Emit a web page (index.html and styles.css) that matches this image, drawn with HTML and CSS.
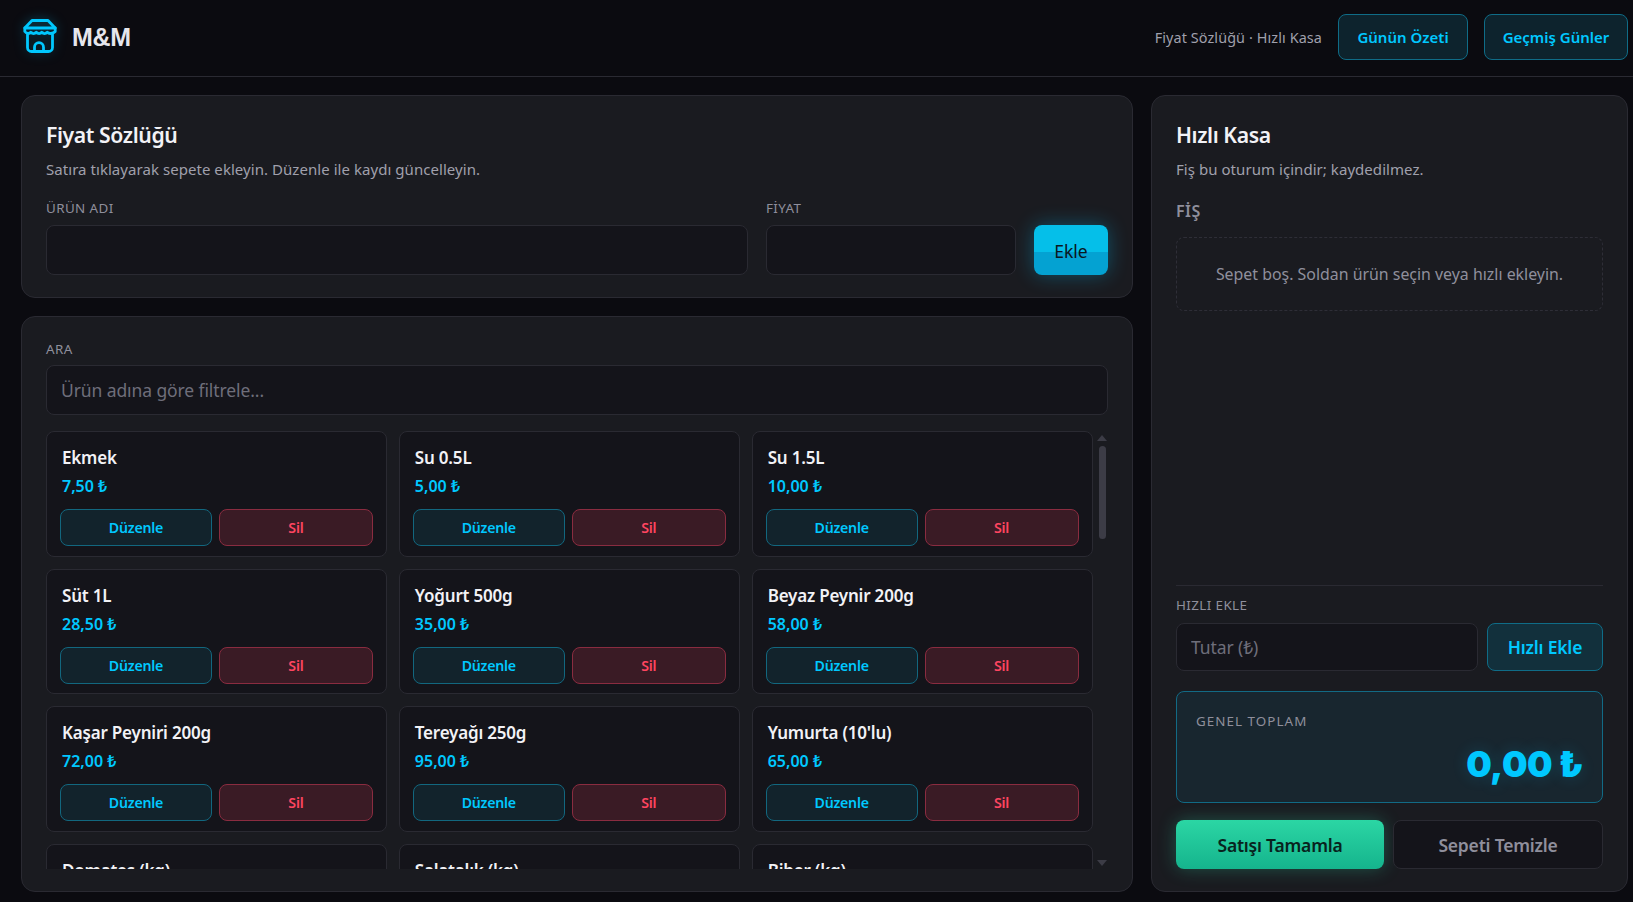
FILE: index.html
```html
<!DOCTYPE html>
<html lang="tr">
<head>
    <meta charset="UTF-8">
    <title>M&amp;M</title>
    <link rel="stylesheet" href="styles.css">
</head>
<body>

    <header class="topbar">
        <div class="brand">
            <svg class="brand-icon" viewBox="0 0 36 36" fill="none" stroke="#00c8ff" stroke-width="2.800" stroke-linejoin="round" stroke-linecap="round">
                <path d="M10 1.500h16l7.200 7.500H2.800z" fill="#0b2a35"/>
                <path d="M2.800 9v3.500c2 2.500 4.500 2.500 6 .8 1.500 1.700 4 1.700 5.500 0 1.500 1.700 4 1.700 5.500 0 1.500 1.700 4 1.700 5.500 0 1.500 1.700 5.500 1.700 7.900-.8V9"/>
                <path d="M5.500 15.500v13a4 4 0 0 0 4 4h17a4 4 0 0 0 4-4v-13"/>
                <path d="M12.500 32.500v-4.300a4.500 4.500 0 0 1 9 0v4.300"/>
            </svg>
            <span class="brand-name">M&amp;M</span>
        </div>
        <div class="topbar-right">
            <span class="topbar-text">Fiyat Sözlüğü · Hızlı Kasa</span>
            <button class="btn btn-ghost top-btn">Günün Özeti</button>
            <button class="btn btn-ghost top-btn">Geçmiş Günler</button>
        </div>
    </header>

    <main class="layout">
        <div class="left-col">
            <section class="panel form-panel">
                <h2>Fiyat Sözlüğü</h2>
                <p class="sub">Satıra tıklayarak sepete ekleyin. Düzenle ile kaydı güncelleyin.</p>
                <div class="form-row">
                    <div class="field name-field">
                        <label>ÜRÜN ADI</label>
                        <input type="text">
                    </div>
                    <div class="field price-field">
                        <label>FİYAT</label>
                        <input type="text">
                    </div>
                    <button class="btn btn-add">Ekle</button>
                </div>
            </section>

            <section class="panel list-panel">
                <div class="field">
                    <label>ARA</label>
                    <input type="text" placeholder="Ürün adına göre filtrele...">
                </div>
                <div class="list-wrap">
                    <div class="product-grid">
                        <div class="product">
                            <div class="p-name">Ekmek</div>
                            <div class="p-price">7,50 ₺</div>
                            <div class="p-actions"><button class="btn btn-edit">Düzenle</button><button class="btn btn-del">Sil</button></div>
                        </div>
                        <div class="product">
                            <div class="p-name">Su 0.5L</div>
                            <div class="p-price">5,00 ₺</div>
                            <div class="p-actions"><button class="btn btn-edit">Düzenle</button><button class="btn btn-del">Sil</button></div>
                        </div>
                        <div class="product">
                            <div class="p-name">Su 1.5L</div>
                            <div class="p-price">10,00 ₺</div>
                            <div class="p-actions"><button class="btn btn-edit">Düzenle</button><button class="btn btn-del">Sil</button></div>
                        </div>
                        <div class="product">
                            <div class="p-name">Süt 1L</div>
                            <div class="p-price">28,50 ₺</div>
                            <div class="p-actions"><button class="btn btn-edit">Düzenle</button><button class="btn btn-del">Sil</button></div>
                        </div>
                        <div class="product">
                            <div class="p-name">Yoğurt 500g</div>
                            <div class="p-price">35,00 ₺</div>
                            <div class="p-actions"><button class="btn btn-edit">Düzenle</button><button class="btn btn-del">Sil</button></div>
                        </div>
                        <div class="product">
                            <div class="p-name">Beyaz Peynir 200g</div>
                            <div class="p-price">58,00 ₺</div>
                            <div class="p-actions"><button class="btn btn-edit">Düzenle</button><button class="btn btn-del">Sil</button></div>
                        </div>
                        <div class="product">
                            <div class="p-name">Kaşar Peyniri 200g</div>
                            <div class="p-price">72,00 ₺</div>
                            <div class="p-actions"><button class="btn btn-edit">Düzenle</button><button class="btn btn-del">Sil</button></div>
                        </div>
                        <div class="product">
                            <div class="p-name">Tereyağı 250g</div>
                            <div class="p-price">95,00 ₺</div>
                            <div class="p-actions"><button class="btn btn-edit">Düzenle</button><button class="btn btn-del">Sil</button></div>
                        </div>
                        <div class="product">
                            <div class="p-name">Yumurta (10'lu)</div>
                            <div class="p-price">65,00 ₺</div>
                            <div class="p-actions"><button class="btn btn-edit">Düzenle</button><button class="btn btn-del">Sil</button></div>
                        </div>
                        <div class="product">
                            <div class="p-name">Domates (kg)</div>
                            <div class="p-price">32,00 ₺</div>
                            <div class="p-actions"><button class="btn btn-edit">Düzenle</button><button class="btn btn-del">Sil</button></div>
                        </div>
                        <div class="product">
                            <div class="p-name">Salatalık (kg)</div>
                            <div class="p-price">28,00 ₺</div>
                            <div class="p-actions"><button class="btn btn-edit">Düzenle</button><button class="btn btn-del">Sil</button></div>
                        </div>
                        <div class="product">
                            <div class="p-name">Biber (kg)</div>
                            <div class="p-price">40,00 ₺</div>
                            <div class="p-actions"><button class="btn btn-edit">Düzenle</button><button class="btn btn-del">Sil</button></div>
                        </div>
                    </div>
                    <div class="scroll-track">
                        <span class="arrow-up"></span>
                        <span class="scroll-thumb"></span>
                        <span class="arrow-down"></span>
                    </div>
                </div>
            </section>
        </div>

        <aside class="panel till">
            <h2>Hızlı Kasa</h2>
            <p class="sub">Fiş bu oturum içindir; kaydedilmez.</p>
            <div class="receipt-title">FİŞ</div>
            <div class="receipt-empty">Sepet boş. Soldan ürün seçin veya hızlı ekleyin.</div>

            <div class="till-bottom">
                <label>HIZLI EKLE</label>
                <div class="quick-row">
                    <input type="text" placeholder="Tutar (₺)">
                    <button class="btn btn-ghost btn-quick">Hızlı Ekle</button>
                </div>
                <div class="total-box">
                    <div class="total-label">GENEL TOPLAM</div>
                    <div class="total-value">0,00 ₺</div>
                </div>
                <div class="till-actions">
                    <button class="btn btn-done">Satışı Tamamla</button>
                    <button class="btn btn-clear">Sepeti Temizle</button>
                </div>
            </div>
        </aside>
    </main>

</body>
</html>
```

FILE: styles.css
```css
* {
    box-sizing: border-box;
}

html, body {
    height: 100%;
}

body {
    margin: 0;
    height: 902px;
    overflow: hidden;
    display: flex;
    flex-direction: column;
    font-family: "Noto Sans", "Open Sans", sans-serif;
    color: #f0f0f4;
    background-color: #0b0b10;
}

/* top bar */
.topbar {
    height: 77px;
    flex: none;
    display: flex;
    align-items: center;
    justify-content: space-between;
    padding: 0 5px 2px 22px;
    border-bottom: 1px solid #2a2a32;
    background-color: #0b0b10;
}

.brand {
    display: flex;
    align-items: center;
    gap: 14px;
}

.brand-icon {
    width: 36px;
    height: 36px;
    filter: drop-shadow(0 0 6px rgba(0, 200, 255, 0.25));
}

.brand-name {
    font-family: "Liberation Sans", Arial, sans-serif;
    font-weight: 700;
    font-size: 25px;
    letter-spacing: -0.3px;
    color: #e6e6ec;
}

.topbar-right {
    display: flex;
    align-items: center;
    gap: 16px;
}

.topbar-text {
    font-size: 14.4px;
    letter-spacing: 0.1px;
    color: #a0a0ac;
}

.btn {
    font-family: inherit;
    border-radius: 8px;
    cursor: pointer;
}

.btn-ghost {
    color: #00c8ff;
    background-color: #0d232d;
    border: 1px solid #0f6c87;
    font-weight: 600;
}

.top-btn {
    height: 46px;
    font-size: 15px;
    padding: 0;
}

.top-btn:nth-child(2) {
    width: 130px;
}

.top-btn:nth-child(3) {
    width: 144px;
}

/* main layout */
.layout {
    flex: 1;
    min-height: 0;
    display: flex;
    gap: 18px;
    padding: 18px 5px 10px 21px;
}

.left-col {
    width: 1112px;
    flex: none;
    display: flex;
    flex-direction: column;
    gap: 18px;
    min-height: 0;
}

.panel {
    background-color: #1a1b20;
    border: 1px solid #2a2a32;
    border-radius: 14px;
    padding: 24px;
}

h2 {
    margin: 1px 0 0;
    font-size: 21.2px;
    line-height: 28px;
    font-weight: 600;
    letter-spacing: -0.4px;
    color: #f2f2f6;
}

.sub {
    margin: 10px 0 0;
    font-size: 15px;
    line-height: 20px;
    letter-spacing: 0.05px;
    color: #a0a0ac;
}

label {
    display: block;
    font-size: 13.4px;
    line-height: 18px;
    letter-spacing: 0.4px;
    color: #8f8f9c;
    margin-bottom: 7px;
}

input {
    display: block;
    width: 100%;
    height: 50px;
    padding: 0 14px;
    font-family: inherit;
    font-size: 17.5px;
    letter-spacing: -0.1px;
    color: #f0f0f4;
    background-color: #14141a;
    border: 1px solid #2a2a32;
    border-radius: 8px;
}

input::placeholder {
    color: #6e6e7a;
}

/* product form */
.form-panel {
    height: 203px;
    flex: none;
}

.form-row {
    display: flex;
    align-items: flex-end;
    gap: 18px;
    margin-top: 20px;
}

.form-row label {
    margin-bottom: 8px;
}

.name-field {
    width: 702px;
}

.price-field {
    width: 250px;
}

.btn-add {
    width: 74px;
    height: 50px;
    padding: 2px 0 0;
    border: none;
    font-size: 17.5px;
    color: #0b1620;
    background: linear-gradient(180deg, #05bfe9 53%, #04a2d2 54%);
    box-shadow: 0 0 20px rgba(0, 200, 255, 0.32);
}

/* product list */
.list-panel {
    flex: 1;
    min-height: 0;
    padding-top: 23px;
    padding-bottom: 22px;
    display: flex;
    flex-direction: column;
    gap: 16px;
}

.list-wrap {
    flex: 1;
    min-height: 0;
    display: flex;
    gap: 5px;
}

.product-grid {
    flex: 1;
    overflow: hidden;
    display: grid;
    grid-template-columns: repeat(3, 1fr);
    grid-auto-rows: 125.5px;
    gap: 12px;
}

.product {
    background-color: #14141a;
    border: 1px solid #2a2a32;
    border-radius: 8px;
    padding: 14px 13px 0;
}

.p-name {
    font-size: 17px;
    line-height: 24px;
    font-weight: 600;
    letter-spacing: -0.2px;
    padding-left: 2px;
    color: #f2f2f6;
}

.p-price {
    margin-top: 5px;
    font-size: 16px;
    line-height: 22px;
    font-weight: 600;
    padding-left: 2px;
    color: #00c8ff;
}

.p-actions {
    display: flex;
    gap: 7px;
    margin-top: 12px;
}

.p-actions .btn {
    height: 37px;
    padding: 0;
    font-size: 14.2px;
    font-weight: 600;
    letter-spacing: -0.25px;
}

.btn-edit {
    flex: 152;
    color: #00c8ff;
    background-color: #12232c;
    border: 1px solid #12677f;
}

.btn-del {
    flex: 154;
    color: #ff4560;
    background-color: #3a1b25;
    border: 1px solid #8a2c40;
}

.scroll-track {
    width: 9px;
    flex: none;
    margin-right: 1.5px;
    display: flex;
    flex-direction: column;
    align-items: center;
    padding-top: 4px;
    gap: 5px;
}

.scroll-thumb {
    width: 7px;
    height: 93px;
    border-radius: 4px;
    background-color: #3c3c46;
}

.arrow-up {
    border-left: 5px solid transparent;
    border-right: 5px solid transparent;
    border-bottom: 6px solid #3c3c46;
}

.arrow-down {
    margin-top: auto;
    margin-bottom: 3px;
    border-left: 5px solid transparent;
    border-right: 5px solid transparent;
    border-top: 6px solid #3c3c46;
}

/* till */
.till {
    flex: 1;
    display: flex;
    flex-direction: column;
    padding-bottom: 22px;
}

.receipt-title {
    margin-top: 21px;
    font-size: 16px;
    line-height: 22px;
    font-weight: 600;
    letter-spacing: 0.5px;
    color: #8f8f9c;
}

.receipt-empty {
    margin-top: 15px;
    height: 74px;
    display: flex;
    align-items: center;
    justify-content: center;
    font-size: 15.9px;
    color: #8f8f9c;
    border: 1px dashed #2e2e37;
    border-radius: 8px;
}

.till-bottom {
    margin-top: auto;
    padding-top: 10px;
    border-top: 1px solid #2a2a32;
}

.till-bottom label {
    margin-bottom: 9px;
}

.quick-row {
    display: flex;
    gap: 9px;
}

.quick-row input {
    flex: 1;
    height: 48px;
}

.btn-quick {
    width: 116px;
    flex: none;
    font-size: 17.5px;
    letter-spacing: -0.2px;
    padding: 0;
    background-color: #12303c;
}

.total-box {
    margin-top: 20px;
    height: 112px;
    padding: 20px 19px 0;
    background-color: #18262f;
    border: 1px solid #126a85;
    border-radius: 8px;
}

.total-label {
    font-size: 13.4px;
    line-height: 18px;
    letter-spacing: 1.05px;
    color: #8f8f9c;
}

.total-value {
    margin-top: 12px;
    text-align: right;
    font-family: "Inter", sans-serif;
    font-size: 36px;
    line-height: 44px;
    font-weight: 900;
    letter-spacing: -0.5px;
    color: #00c8ff;
    text-shadow: 0 0 16px rgba(0, 200, 255, 0.2);
}

.till-actions {
    display: flex;
    gap: 9px;
    margin-top: 17px;
}

.till-actions .btn {
    flex: 1;
    height: 49px;
    padding: 0;
    font-size: 17.5px;
    font-weight: 600;
    letter-spacing: -0.2px;
}

.btn-done {
    color: #08231d;
    background: linear-gradient(180deg, #2bd6a4, #15b48d);
    border: none;
    box-shadow: 0 0 18px rgba(43, 214, 164, 0.3);
}

.btn-clear {
    color: #8f8f9c;
    background-color: #14141a;
    border: 1px solid #2a2a32;
}
```
